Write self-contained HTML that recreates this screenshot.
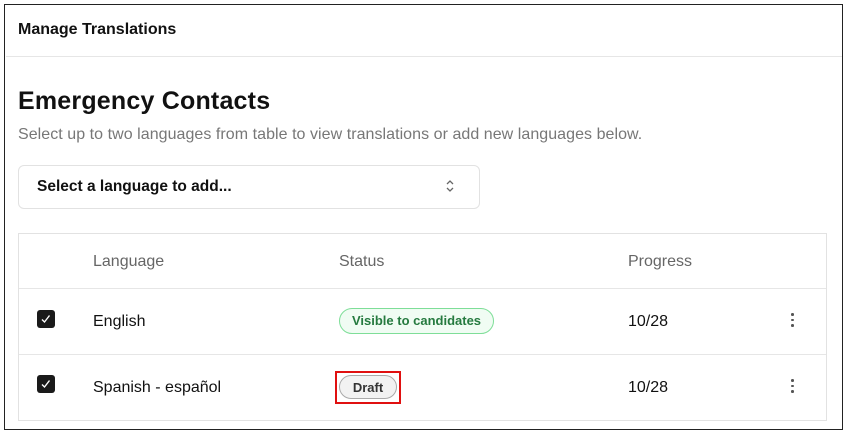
<!DOCTYPE html><html><head><style>
body{margin:0;width:848px;height:435px;background:#fff;font-family:"Liberation Sans",sans-serif;position:relative;overflow:hidden}
.frame{position:absolute;left:4px;top:4px;width:837px;height:424px;border:1.5px solid #222}
.a{position:absolute;white-space:nowrap}
.cb{position:absolute;width:18px;height:18px;background:#1a1a1a;border-radius:3px}
.dots{position:absolute;width:3px}
.dots i{display:block;width:2.5px;height:2.5px;background:#555;border-radius:50%;margin-bottom:3px}
</style></head><body>
<div class="frame"></div>
<div class="a" style="left:18px;top:21px;font-size:16px;font-weight:bold;color:#111">Manage Translations</div>
<div class="a" style="left:6px;top:56px;width:836px;height:1px;background:#e6e6e6"></div>
<div class="a" style="left:18px;top:87px;font-size:25px;font-weight:bold;color:#111;letter-spacing:0.2px">Emergency Contacts</div>
<div class="a" style="left:18px;top:126px;font-size:16px;color:#777;letter-spacing:0.05px">Select up to two languages from table to view translations or add new languages below.</div>
<div class="a" style="left:18px;top:165px;width:460px;height:42px;border:1px solid #e2e2e2;border-radius:6px"></div>
<div class="a" style="left:37px;top:178px;font-size:15.5px;font-weight:bold;color:#111">Select a language to add...</div>
<svg class="a" style="left:444px;top:178px" width="12" height="16" viewBox="0 0 12 16"><path d="M3 6l3-3 3 3M3 10l3 3 3-3" fill="none" stroke="#666" stroke-width="1.3"/></svg>
<div class="a" style="left:18px;top:233px;width:807px;height:186px;border:1px solid #e2e2e2"></div>
<div class="a" style="left:19px;top:288px;width:807px;height:1px;background:#e6e6e6"></div>
<div class="a" style="left:19px;top:354px;width:807px;height:1px;background:#e6e6e6"></div>
<div class="a" style="left:93px;top:253px;font-size:16px;color:#666">Language</div>
<div class="a" style="left:339px;top:253px;font-size:16px;color:#666">Status</div>
<div class="a" style="left:628px;top:253px;font-size:16px;color:#666">Progress</div>
<div class="cb" style="left:37px;top:310px"><svg width="18" height="18"><path d="M5 9.5l2.5 2.5 5-6.5" fill="none" stroke="#fff" stroke-width="1.4"/></svg></div>
<div class="cb" style="left:37px;top:375px"><svg width="18" height="18"><path d="M5 9.5l2.5 2.5 5-6.5" fill="none" stroke="#fff" stroke-width="1.4"/></svg></div>
<div class="a" style="left:93px;top:313px;font-size:16px;color:#111">English</div>
<div class="a" style="left:93px;top:379px;font-size:16px;color:#111">Spanish - español</div>
<div class="a" style="left:339px;top:308px;width:153px;height:24px;border:1px solid #7ede98;border-radius:13px;background:#f0fcf3;color:#257a3f;font-size:13px;font-weight:bold;text-align:center;line-height:24px">Visible to candidates</div>
<div class="a" style="left:335px;top:371px;width:66px;height:33px;border:2px solid #e01010;box-sizing:border-box"></div>
<div class="a" style="left:339px;top:375px;width:58px;height:24px;border:1px solid #aaa;border-radius:12px;background:#f2f2f2;color:#333;font-size:13px;font-weight:bold;text-align:center;line-height:23px;box-sizing:border-box">Draft</div>
<div class="a" style="left:628px;top:313px;font-size:16px;color:#111">10/28</div>
<div class="a" style="left:628px;top:379px;font-size:16px;color:#111">10/28</div>
<div class="dots" style="left:791px;top:313px"><i></i><i></i><i></i></div>
<div class="dots" style="left:791px;top:379px"><i></i><i></i><i></i></div>
</body></html>
